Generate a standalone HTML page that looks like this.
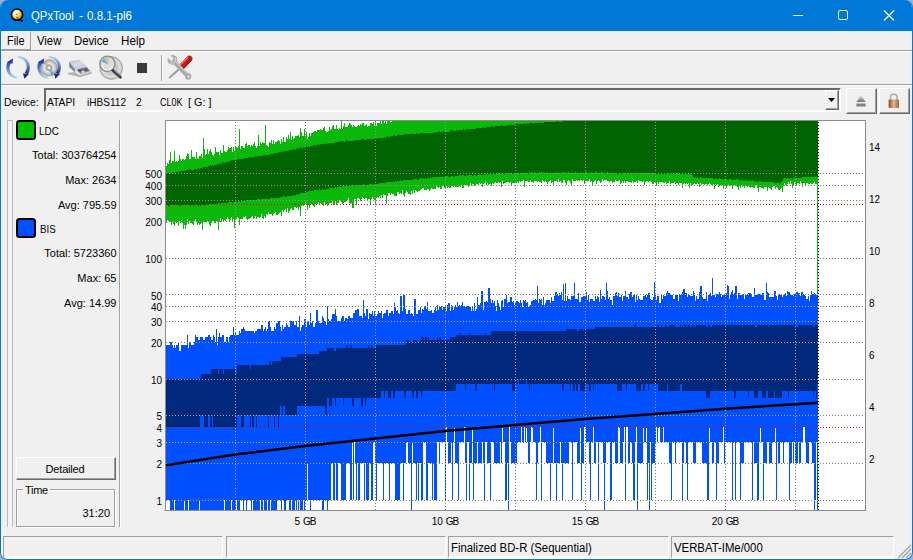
<!DOCTYPE html>
<html><head><meta charset="utf-8"><title>QPxTool</title>
<style>
*{box-sizing:border-box;margin:0;padding:0}
html,body{width:913px;height:560px;overflow:hidden;background:#9cb0c8}
body{font-family:"Liberation Sans",sans-serif;font-size:11px;color:#000;position:relative}
#win{position:absolute;left:0;top:0;width:913px;height:560px;background:#f0f0f0;border:1px solid #0078d7;border-top:none;border-radius:8px;overflow:hidden}
.abs{position:absolute}
#title{position:absolute;left:-1px;top:0;width:913px;height:31px;background:#0078d7;color:#fff;font-size:12px}
#title .t{position:absolute;top:9px;line-height:15px;white-space:nowrap;transform-origin:0 50%}
#menu{position:absolute;left:0;top:31px;width:911px;height:20px;font-size:12px}
#menu span{position:absolute;top:3px;line-height:14px;transform-origin:0 50%}
.hl{border-top:1px solid #a0a0a0;border-bottom:1px solid #fff;height:2px;position:absolute;left:0;width:911px}
.sunk{border:1px solid;border-color:#a0a0a0 #fff #fff #a0a0a0}
.rais{border:1px solid;border-color:#fff #696969 #696969 #fff;box-shadow:inset -1px -1px 0 #a0a0a0}
.yl{font-size:10px;position:absolute;left:118px;width:71px;text-align:right;height:14px;line-height:14px;transform:translateX(-28px)}
.yr{font-size:10px;position:absolute;left:868px;height:14px;line-height:14px}
.xl{font-size:10px;position:absolute;top:514px;width:60px;text-align:center;height:14px;line-height:14px}.xl span{letter-spacing:-1px}
.st{position:absolute;top:536px;height:23px;border:1px solid;border-bottom:3px solid;border-color:#a0a0a0 #fff #fff #a0a0a0;font-size:12px;line-height:23px;padding-left:2px;white-space:nowrap}.st span{display:inline-block;transform-origin:0 50%;transform:scaleX(.946)}
.dv{top:5px;line-height:14px;white-space:pre;transform-origin:0 50%}.pv{position:absolute;right:795.5px;height:14px;line-height:14px;white-space:nowrap}
</style></head><body>
<div id="win">
 <div id="title">
  <svg class="abs" style="left:8px;top:6px" width="18" height="18" viewBox="0 0 18 18">
   <defs><radialGradient id="ti" cx="0.32" cy="0.3" r="0.8"><stop offset="0" stop-color="#fff"/><stop offset="0.35" stop-color="#fde8b0"/><stop offset="0.7" stop-color="#f8b818"/><stop offset="1" stop-color="#f09800"/></radialGradient></defs>
   <path d="M11.4 13.6 L14.8 15.6" stroke="#0a0a0a" stroke-width="1.7"/>
   <circle cx="9" cy="8.6" r="5.6" fill="url(#ti)" stroke="#050505" stroke-width="1.7"/>
   <circle cx="8.8" cy="8.2" r="0.8" fill="#4a86c8"/>
   <path d="M8.6 11.2 L10.6 12.2" stroke="#222" stroke-width="1"/>
  </svg>
  <div class="t tw" style="left:31.2px;transform:scaleX(.945)">QPxTool</div><div class="t tw" style="left:78.6px;transform:scaleX(1.1)">-</div><div class="t tw" style="left:86.6px;transform:scaleX(.964)">0.8.1-pl6</div>
  <svg class="abs" style="left:780px;top:0" width="133" height="31" viewBox="0 0 133 31">
   <path d="M13 15.5H23" stroke="#fff" stroke-width="1"/>
   <rect x="58.5" y="10.5" width="9" height="9" rx="1.3" fill="none" stroke="#fff" stroke-width="1"/>
   <path d="M104 10.5L114 20.5M114 10.5L104 20.5" stroke="#fff" stroke-width="1.1"/>
  </svg>
 </div>
 <div id="menu">
  <div class="abs" style="left:0;top:0;width:30px;height:19px;border:1px solid;border-color:#fff #a0a0a0 #a0a0a0 #fff"></div>
  <span style="left:6.2px;transform:scaleX(.907)">File</span><span style="left:36.2px;transform:scaleX(.942)">View</span><span style="left:73.3px;transform:scaleX(.943)">Device</span><span style="left:120.4px;transform:scaleX(.972)">Help</span>
 </div>
 <div class="hl" style="top:50px"></div>
 <!-- toolbar -->
 <svg class="abs" style="left:-1px;top:52px" width="200" height="32" viewBox="0 0 200 32">
  <defs>
   <linearGradient id="ar1" x1="0" y1="1" x2="0" y2="0"><stop offset="0" stop-color="#b8dcf8"/><stop offset="1" stop-color="#1c3c9c"/></linearGradient>
   <linearGradient id="ar2" x1="0" y1="0" x2="0" y2="1"><stop offset="0" stop-color="#b8dcf8"/><stop offset="1" stop-color="#1a2a8c"/></linearGradient>
   <linearGradient id="dtop" x1="0" y1="0" x2="1" y2="1"><stop offset="0" stop-color="#b0b8c8"/><stop offset=".5" stop-color="#d8dee8"/><stop offset="1" stop-color="#a8b0c0"/></linearGradient><radialGradient id="cd2" cx="0.5" cy="0.5" r="0.5"><stop offset="0" stop-color="#f4f4f4"/><stop offset="0.5" stop-color="#c4c4c4"/><stop offset="0.8" stop-color="#e2e2e2"/><stop offset="1" stop-color="#a4a4a4"/></radialGradient><radialGradient id="cd" cx="0.5" cy="0.5" r="0.5"><stop offset="0" stop-color="#f8f8f8"/><stop offset="0.3" stop-color="#9c9c9c"/><stop offset="0.5" stop-color="#e8e8e8"/><stop offset="0.8" stop-color="#c4c4c4"/><stop offset="1" stop-color="#a4a4a4"/></radialGradient>
  </defs>
  <!-- icon1 refresh -->
  <g id="arrows">
   <path d="M16.8 26.8L15.2 26.6L13.6 26.1L12.1 25.3L10.7 24.4L9.5 23.3L8.4 22.0L7.5 20.5L6.9 19.0L6.5 17.3L6.3 15.6L6.4 13.9L6.7 12.3L7.2 10.7L8.0 9.1L11.1 11.1L10.5 12.1L10.0 13.2L9.7 14.4L9.5 15.6L9.6 16.8L9.8 18.0L10.1 19.2L10.7 20.4L11.4 21.4L12.3 22.4L13.3 23.2L14.5 23.9L15.7 24.4L17.0 24.7Z" fill="url(#ar1)"/>
   <path d="M7.6 9.9L13.1 6.3L12.5 11.8Z" fill="#1c3ca0"/>
   <path d="M17.6 3.8L19.5 3.9L21.3 4.2L23.1 4.9L24.7 5.8L26.2 7.0L27.5 8.4L28.5 10.0L29.3 11.8L29.7 13.7L29.9 15.6L29.7 17.5L29.3 19.4L28.5 21.2L27.5 22.8L24.5 20.5L25.4 19.4L26.0 18.2L26.4 16.9L26.7 15.5L26.7 14.1L26.4 12.7L26.0 11.3L25.3 10.0L24.4 8.9L23.3 7.9L22.1 7.0L20.7 6.4L19.2 6.0L17.7 5.8Z" fill="url(#ar2)"/>
   <path d="M23 21.5L29 22.1L24.4 26.7Z" fill="#1a2a8c"/>
  </g>
  <!-- icon2 disc + arrows -->
  <circle cx="49" cy="15.8" r="8.2" fill="url(#cd)" stroke="#909090" stroke-width="0.6"/>
  <path d="M49 15.8 L42.6 10.6 L44.2 8.8Z" fill="#78cc78" opacity=".85"/><path d="M49 15.8 L44.2 8.8 L46.6 7.9Z" fill="#e8a870" opacity=".85"/>
  <path d="M49 15.8 L55.4 21 L53.8 22.8Z" fill="#78cc78" opacity=".85"/><path d="M49 15.8 L53.8 22.8 L51.4 23.7Z" fill="#6888e0" opacity=".85"/>
  <circle cx="49" cy="15.8" r="2.6" fill="#b8b8b8" stroke="#9a9a9a" stroke-width=".5"/><circle cx="49" cy="15.8" r="1.2" fill="#f4f4f4"/>
  <use href="#arrows" x="31" y="0"/>
  <!-- icon3 drive -->
  <path d="M67.8 20.8 L75 20.2 L80.2 23.4 L91.6 20.2 L92 21.6 L80.4 25.2 L68 22.2Z" fill="#a4a4a4" opacity=".85"/>
  <path d="M68.9 9.7 L79.1 7.6 L86.4 13.9 L75.2 17Z" fill="url(#dtop)"/>
  <path d="M68.9 9.7 L75.2 17 L75.2 20.4 L69.3 15.3Z" fill="#8088a0"/>
  <path d="M75.2 17 L86.4 13.9 L91.7 19.4 L80.1 23Z" fill="#d4d6dc"/>
  <path d="M76.6 17.6 L86.2 15 L90 19 L80.4 21.8Z" fill="#787e90"/>
  <ellipse cx="80.2" cy="18.6" rx="2" ry="1.5" fill="#565c70"/><ellipse cx="86.2" cy="17.6" rx="2" ry="1.6" fill="#5a6074"/>
  <ellipse cx="83" cy="20" rx="1.9" ry="1.2" fill="#ecc4b0"/>
  <path d="M80.1 23 L91.7 19.4 L91.7 20.6 L80.1 24.2Z" fill="#b8bac0"/>
  <!-- icon4 magnifier disc -->
  <circle cx="111.2" cy="16" r="11.4" fill="url(#cd2)" stroke="#a0a0a0" stroke-width="0.7"/>
  <path d="M111.6 16 L119.4 26.4 L116.2 27.6Z" fill="#e8c898" opacity=".8"/><path d="M111.6 16 L121.6 22.4 L119.4 26.4Z" fill="#98a8e8" opacity=".6"/>
  <circle cx="111.6" cy="16" r="2.6" fill="#e8e8e8" stroke="#b0b0b0" stroke-width=".5"/>
  <circle cx="107.4" cy="11.8" r="7.6" fill="#e4e4e4" fill-opacity=".7" stroke="#8a8a8a" stroke-width="1.3"/>
  <path d="M108.4 12.4 L101.6 9.6 L103.6 6.4Z" fill="#6c8ce4" opacity=".85"/><path d="M108.4 12.4 L103.6 6.4 L106.4 5Z" fill="#86d486" opacity=".85"/><path d="M108.4 12.4 L106.4 5 L109.6 4.8Z" fill="#f0b49c" opacity=".8"/>
  <path d="M101.4 13.6 A6.4 6.4 0 0 0 112.6 15.6" stroke="#fff" stroke-width="1" fill="none" opacity=".8"/>
  <path d="M112.8 18.4 L120.4 25.2" stroke="#404040" stroke-width="2.8" stroke-linecap="round"/>
  <path d="M114.8 19 L119.4 23" stroke="#6890e0" stroke-width="1" stroke-linecap="round"/>
  <!-- stop -->
  <rect x="137" y="11" width="10" height="10" fill="#3a3a3a"/>
  <!-- sep -->
  <rect x="161" y="3" width="1" height="26" fill="#a0a0a0"/><rect x="162" y="3" width="1" height="26" fill="#fff"/>
  <!-- tools -->
  <path d="M180 16.2 L170 25.2" stroke="#9c9c9c" stroke-width="2" stroke-linecap="butt"/>
  <path d="M171.2 23 L168.4 25.6 L169.6 26.8 L172.4 24.2Z" fill="#a8a8a8"/>
  <path d="M189.4 6.6 L181 15.2" stroke="#c81818" stroke-width="6" stroke-linecap="round"/>
  <path d="M187.6 5.4 L179.4 13.8" stroke="#f47878" stroke-width="1.4" stroke-linecap="round"/>
  <path d="M191 8.4 L182.8 16.8" stroke="#8c0c0c" stroke-width="1.2" stroke-linecap="round"/>
  <path d="M174.6 10.2 L187.6 23.8" stroke="#a8a8a8" stroke-width="4.4" stroke-linecap="butt"/>
  <path d="M175.4 9.4 L188.2 22.8" stroke="#e0e0e0" stroke-width="1" stroke-linecap="butt"/>
  <circle cx="172.4" cy="7.8" r="4.9" fill="#acacac"/>
  <path d="M172.6 8 L167.4 2.8" stroke="#f0f0f0" stroke-width="3.4"/>
  <path d="M170.2 10.6 A3.6 3.6 0 0 0 175.2 5.6" stroke="#dcdcdc" stroke-width="1" fill="none"/>
  <circle cx="188.2" cy="24.4" r="3.1" fill="#a8a8a8"/><circle cx="188.4" cy="24.6" r="1.1" fill="#f0f0f0"/>
 </svg>
 <div class="hl" style="top:84px"></div>
 <!-- device row -->
 <div class="abs" style="left:2.9px;top:95px;line-height:14px;transform-origin:0 50%;transform:scaleX(.943)">Device:</div>
 <div class="abs" style="left:43px;top:88px;width:797px;height:24px;border:2px solid;border-color:#696969 #fff #fff #696969;box-shadow:inset 0 0 0 0 #000;background:#f0f0f0">
   <div class="abs dv" style="left:0.9px;transform:scaleX(.935)">ATAPI</div><div class="abs dv" style="left:41.3px;transform:scaleX(.918)">iHBS112</div><div class="abs dv" style="left:90.1px;transform:scaleX(.92)">2</div><div class="abs dv" style="left:113.9px;transform:scaleX(.818)">CL0K</div><div class="abs dv" style="left:141.5px;transform:scaleX(.985)">[ G: ]</div>
   <div class="abs rais" style="right:0;top:0;width:14px;height:20px;background:#f0f0f0"><svg class="abs" style="left:2px;top:7px" width="8" height="5"><path d="M0 0H7L3.5 4Z" fill="#000"/></svg></div>
 </div>
 <div class="abs rais" style="left:845px;top:88px;width:31px;height:26px">
   <svg class="abs" style="left:9px;top:6px" width="10" height="13" viewBox="0 0 12 13" preserveAspectRatio="none"><defs><linearGradient id="ej" x1="0" y1="0" x2="0" y2="1"><stop offset="0" stop-color="#e8e8e8"/><stop offset="1" stop-color="#707070"/></linearGradient></defs><path d="M6 0L11.5 7H.5Z" fill="url(#ej)"/><rect x=".5" y="8.5" width="11" height="3" fill="#808080"/></svg>
 </div>
 <div class="abs rais" style="left:878px;top:88px;width:31px;height:26px">
   <svg class="abs" style="left:8px;top:4px" width="13" height="17" viewBox="0 0 13 17"><defs><linearGradient id="lk" x1="0" y1="0" x2="1" y2="0"><stop offset="0" stop-color="#8a4a28"/><stop offset=".5" stop-color="#e4b888"/><stop offset="1" stop-color="#a06038"/></linearGradient></defs><path d="M2.55 7.5V4.3A3.25 3.25 0 0 1 9.05 4.3V7.5" fill="none" stroke="#b4b4b4" stroke-width="1.7"/><rect x="0.6" y="6.4" width="10.4" height="8.7" rx="1" fill="url(#lk)"/></svg>
 </div>
 <!-- left panel -->
 <div class="abs" style="left:6px;top:120px;width:6px;height:407px;border:1px solid #bcbcbc;border-bottom:none;background:#f4f4f4"></div>
 <div class="abs" style="left:118px;top:120px;width:2px;height:407px;border-left:1px solid #a0a0a0;border-right:1px solid #fff"></div>
 <div class="abs" style="left:15px;top:120px;width:20px;height:20px;border:2px solid #000;border-radius:3.5px;background:#00be00"></div>
 <div class="abs" style="left:38.3px;top:124px;line-height:14px;transform-origin:0 50%;transform:scaleX(.9)">LDC</div>
 <div class="pv" style="top:148px">Total: 303764254</div>
 <div class="pv" style="top:173px">Max: 2634</div>
 <div class="pv" style="top:198px">Avg: 795.59</div>
 <div class="abs" style="left:15px;top:218px;width:20px;height:20px;border:2px solid #000;border-radius:3.5px;background:#0050ff"></div>
 <div class="abs" style="left:38.5px;top:222px;line-height:14px;transform-origin:0 50%;transform:scaleX(.886)">BIS</div>
 <div class="pv" style="top:246px">Total: 5723360</div>
 <div class="pv" style="top:271px">Max: 65</div>
 <div class="pv" style="top:296px">Avg: 14.99</div>
 <div class="abs rais" style="left:15px;top:457px;width:100px;height:23px;text-align:center;line-height:23px;letter-spacing:-.2px;text-indent:-2px">Detailed</div>
 <div class="abs" style="left:15px;top:489px;width:99px;height:38px;border:1px solid #a0a0a0;box-shadow:inset 1px 1px 0 #fff, 1px 1px 0 #fff"></div>
 <div class="abs" style="left:22px;top:483px;background:#f0f0f0;padding:0 2px;line-height:14px;letter-spacing:-.3px">Time</div>
 <div class="abs" style="left:60px;width:49px;text-align:right;top:506px;line-height:14px">31:20</div>
 <!-- chart -->
 <div class="abs" style="left:164px;top:120px;width:701px;height:391px;border:1px solid #8c8c8c;background:#fff"></div>
 <svg class="abs" style="left:-1px;top:0" width="913" height="560" viewBox="0 0 913 560" shape-rendering="crispEdges">
<path id="lb" fill="#0050ff" d="M166 500V345H170V342H172V345H173V348H174V345H175V348H176V345H178V342H179V351H181V345H187V335H188V348H189V342H191V345H194V342H195V335H196V337H198V340H200V337H203V340H205V337H208V335H210V337H211V340H213V335H214V337H215V342H216V329H217V345H218V337H219V333H220V337H222V335H224V342H226V337H228V342H229V337H230V335H233V327H234V335H235V333H236V335H239V331H240V333H241V329H243V327H244V329H245V331H254V333H255V331H257V329H261V325H263V331H264V329H265V327H266V331H267V329H268V321H270V327H271V331H274V327H275V329H276V323H278V321H280V327H281V331H282V325H283V329H284V327H286V323H287V325H288V327H290V321H294V325H296V321H297V327H299V316H300V331H301V327H302V325H304V319H306V327H307V321H309V325H310V313H311V323H312V321H313V327H315V323H316V310H318V321H319V323H322V316H323V318H324V321H326V325H327V306H328V319H329V321H331V319H332V314H335V309H336V316H337V321H341V318H342V316H344V321H345V318H347V319H348V316H350V318H353V313H355V310H357V309H359V316H362V318H363V300H364V313H365V316H366V309H368V319H369V313H370V314H372V311H373V316H374V311H375V316H377V314H378V311H379V313H381V311H382V318H383V314H384V313H386V310H388V316H389V313H391V311H393V314H394V303H395V307H396V311H397V310H398V313H399V314H400V296H402V311H403V295H405V309H406V314H408V310H410V314H411V313H412V314H413V316H414V299H416V314H418V310H420V307H421V313H422V309H423V310H424V306H426V309H427V302H428V311H431V310H432V313H434V310H435V307H436V311H437V305H438V310H439V307H441V306H442V310H443V307H446V311H447V305H448V303H450V311H451V305H452V306H453V310H454V306H455V305H456V307H457V302H458V306H459V305H460V307H461V305H462V302H463V307H464V306H465V307H467V306H470V307H471V311H472V307H473V311H474V303H475V311H476V309H477V297H478V305H480V303H481V291H483V310H484V302H486V301H487V302H488V288H490V299H491V303H492V300H493V303H494V301H495V306H496V311H497V300H498V303H499V306H500V310H501V301H502V300H503V307H504V299H506V295H507V303H508V302H510V297H512V302H513V301H514V305H515V302H516V301H518V302H519V303H520V300H521V303H522V307H523V300H524V301H525V300H526V303H527V302H528V307H530V305H531V301H533V300H535V299H536V300H537V286H538V303H539V299H540V300H541V299H542V305H543V297H544V305H545V303H546V300H550V303H551V297H552V301H554V296H555V292H557V294H558V296H559V293H560V295H561V292H562V300H563V284H564V301H565V283H566V301H567V296H568V299H570V300H571V296H574V283H575V299H578V293H579V302H581V297H583V296H585V297H586V292H587V300H588V295H589V302H590V299H593V301H595V296H596V299H597V296H598V297H599V302H600V290H601V299H602V296H604V297H605V300H606V283H607V291H608V299H609V297H610V300H612V305H613V296H615V293H616V292H617V296H618V293H619V297H621V295H622V301H623V296H625V291H626V297H628V299H629V294H630V292H632V297H633V295H635V302H636V295H637V300H638V296H639V299H640V300H643V296H645V295H646V297H647V295H648V293H650V299H651V300H653V297H654V282H655V293H656V300H657V296H659V303H661V295H662V299H663V295H664V296H666V293H667V291H668V293H670V295H673V299H675V295H676V294H677V295H678V301H679V295H681V294H682V292H683V289H685V293H687V297H688V295H690V296H693V291H694V293H695V301H696V296H697V299H699V292H700V286H702V297H703V299H706V292H707V301H708V295H710V293H711V296H712V278H713V295H715V297H716V294H719V292H720V294H721V297H722V295H726V293H727V285H728V286H729V299H730V294H731V292H732V290H733V294H734V293H735V286H737V299H738V293H740V295H742V294H744V299H745V295H747V294H748V293H751V295H752V297H754V288H755V295H758V294H760V295H762V293H764V300H766V283H767V292H768V293H769V297H774V291H776V296H777V300H778V294H780V295H782V297H783V295H785V293H786V296H787V291H788V292H790V295H793V296H794V294H796V292H798V293H800V296H801V292H803V294H804V295H805V296H806V299H808V296H809V301H810V295H811V291H812V294H814V293H815V294H816V295H817V292H818V510V510H817V442H816V500H815V510H814V463H812V442H809V463H806V442H805V427H803V442H801V463H799V442H798V463H795V442H794V463H793V442H792V463H790V500H789V442H784V463H783V442H780V463H778V442H777V500H776V427H775V442H772V463H769V442H767V463H764V500H763V442H761V427H760V442H759V500H757V463H754V442H753V500H752V442H744V463H741V500H740V442H736V500H735V442H733V500H732V442H725V463H724V427H723V442H719V463H717V500H716V442H714V463H712V442H710V427H709V500H707V463H702V442H696V463H693V442H688V500H687V463H686V442H684V463H683V500H682V442H676V463H675V442H672V500H671V463H669V442H664V427H663V442H660V427H658V442H657V427H656V442H655V463H652V500H651V442H650V510H649V463H648V500H647V427H646V442H644V427H643V463H638V510H637V427H636V442H635V500H633V463H632V442H630V463H628V427H626V500H625V427H624V442H623V463H620V427H618V463H615V442H612V500H610V442H606V463H605V510H604V463H603V442H599V500H598V442H596V463H594V427H593V442H591V500H590V463H589V442H586V427H584V463H582V500H581V427H580V463H577V442H573V500H572V442H569V463H563V500H562V463H561V442H560V463H557V500H556V463H554V427H553V463H551V500H550V463H546V442H542V500H541V427H540V442H538V463H537V500H536V442H533V427H531V442H530V463H528V442H527V427H526V442H525V427H524V442H522V427H521V442H517V463H511V442H510V427H509V510H508V463H507V500H505V442H503V427H502V463H501V442H500V463H494V442H491V500H490V463H487V442H485V500H484V463H483V442H482V463H478V442H477V463H474V500H473V427H472V463H470V500H469V442H467V500H466V463H465V427H464V442H459V500H458V463H455V427H454V442H453V500H452V442H451V463H448V442H447V427H446V500H445V442H440V463H439V442H437V500H434V463H433V500H432V463H428V500H426V442H423V500H421V463H419V500H418V463H417V500H416V463H413V442H412V510H411V463H408V442H406V463H404V500H403V463H400V500H395V463H390V500H389V463H384V500H383V463H377V500H376V463H375V442H373V500H371V463H369V500H366V463H365V500H364V463H360V500H358V463H357V500H356V463H355V442H354V500H353V442H352V500H350V463H346V500H341V463H338V500H336V463H335V500H333V463H331V500H328V510H327V500H324V510H322V500H311V510H310V500H308V463H307V500H305V510H304V500H303V510H300V500H299V510H298V500H297V510H296V500H295V510H292V500H291V510H289V500H286V510H284V500H282V510H281V500H277V510H271V500H270V510H268V500H267V510H264V500H263V510H261V500H260V510H253V500H252V510H251V500H247V510H246V500H244V510H243V500H240V510H237V500H236V510H232V500H231V510H225V500H224V510H200V500H199V510H189V500H188V510H185V500H184V510H175V500H174V510H170V500H166Z"/>
<path fill="#00287d" d="M166 427V379H201V374H211V369H218V374H219V369H223V374H224V369H235V374H237V365H250V369H251V365H269V361H271V365H272V361H281V357H297V354H319V351H327V348H334V351H336V348H346V345H348V348H350V345H352V348H368V345H369V348H371V345H372V348H376V345H406V340H409V342H413V340H417V342H420V340H421V337H424V340H425V337H427V340H428V337H429V340H433V337H434V340H437V337H438V340H439V337H441V340H450V337H456V335H460V333H461V335H469V333H470V335H485V333H486V335H491V331H566V329H577V331H579V329H583V331H584V329H595V327H634V325H636V327H657V325H659V327H661V325H662V327H665V325H667V327H669V325H675V327H680V325H681V327H682V325H683V327H684V325H687V327H688V325H690V327H692V325H693V327H694V325H695V327H696V325H706V327H708V325H710V327H712V325H742V327H743V325H755V327H757V325H768V327H769V325H796V327H798V325H813V327H815V325H818V384V384H817V398H816V391H814V398H813V391H789V398H788V391H782V398H775V391H774V398H768V391H766V398H762V391H758V398H754V391H749V398H748V391H736V398H734V391H710V398H706V391H682V384H680V391H668V384H667V391H658V384H649V391H648V384H645V391H643V384H641V391H636V384H627V391H626V384H622V391H617V384H594V391H593V384H591V391H589V384H585V391H580V384H578V391H576V384H575V391H573V384H571V391H570V384H564V391H562V384H530V391H529V384H527V379H526V384H519V379H518V384H515V391H512V384H495V391H494V384H477V391H475V384H466V391H465V384H456V391H422V398H421V391H418V398H416V391H414V398H412V391H406V398H404V391H395V398H393V391H391V398H388V391H385V398H384V391H381V398H366V406H365V398H363V406H361V398H354V406H352V398H344V406H343V398H336V406H335V398H332V406H329V398H327V415H325V406H297V415H285V406H283V415H282V406H280V415H279V427H278V415H275V427H274V415H269V427H268V415H257V427H256V415H254V427H252V415H251V427H250V415H244V427H241V415H237V427H213V415H212V427H210V415H208V427H204V415H200V427H166Z"/>
<path id="lgp" fill="#0ab80a" d="M166 223V166H167V163H168V164H169V160H170V152H171V163H172V161H174V151H175V162H176V161H177V162H178V161H179V155H180V159H181V161H182V159H184V160H185V159H186V156H187V153H188V154H189V159H191V150H192V157H195V159H196V152H197V158H198V159H199V156H201V154H202V158H203V138H204V149H205V155H206V154H207V149H208V154H209V151H210V149H211V152H212V155H213V156H214V154H215V147H216V152H219V155H220V150H221V153H223V145H224V151H225V152H227V150H228V147H229V148H231V147H232V152H233V147H234V151H235V147H237V148H238V146H239V129H240V149H241V146H243V148H245V144H246V143H247V146H248V145H250V147H251V145H252V146H253V144H254V142H255V146H256V148H257V146H258V135H259V146H260V142H261V144H262V142H263V143H265V125H266V145H267V146H268V147H269V142H270V143H271V140H272V144H273V140H274V144H275V142H277V141H278V140H279V141H280V144H281V139H282V142H283V137H284V142H286V137H287V139H288V135H289V139H290V132H291V140H292V136H293V139H294V138H295V136H298V135H299V137H300V128H301V132H302V136H304V129H305V136H306V132H307V139H308V137H309V133H310V136H311V133H313V132H314V131H316V132H317V130H320V129H321V130H323V128H324V127H325V131H326V132H328V131H329V127H330V130H331V129H332V126H333V125H334V129H336V125H337V129H338V130H339V128H340V129H341V121H342V129H343V126H344V123H345V127H348V125H349V123H350V124H351V125H352V127H353V125H354V126H355V127H357V126H358V125H359V126H360V124H361V125H362V123H364V126H365V125H366V124H367V127H368V126H370V123H372V124H373V122H374V126H375V121H376V126H377V123H380V121H381V124H382V121H384V123H385V121H386V124H387V121H390V122H392V121H818V183V183H817V184H815V182H814V183H813V184H811V183H810V184H808V183H806V185H805V183H803V187H802V183H801V181H800V184H799V183H797V186H796V184H795V182H794V186H793V188H792V184H791V181H790V184H789V182H788V184H787V186H786V185H785V183H784V186H783V192H782V188H781V189H780V190H778V188H777V187H776V189H775V186H773V187H772V190H771V189H770V188H769V187H768V191H767V187H764V189H763V188H761V187H759V192H758V188H757V185H756V186H755V188H753V187H751V188H750V187H749V186H748V187H747V186H745V188H744V186H743V187H742V185H741V188H740V185H739V190H738V187H737V186H735V185H734V186H733V189H732V185H730V186H729V185H727V188H726V186H724V189H723V185H722V186H721V185H720V186H719V187H718V184H717V185H716V184H715V189H714V184H713V185H711V184H710V183H709V184H708V185H707V184H705V185H704V184H702V185H701V183H700V187H699V184H698V183H697V184H695V183H694V184H693V185H691V183H690V188H689V183H688V184H687V183H686V184H685V183H684V184H683V188H682V183H679V185H678V183H676V184H675V182H674V183H671V184H670V181H669V183H667V184H666V182H665V183H663V182H659V184H658V182H657V186H656V182H654V184H652V182H651V181H649V182H648V181H646V182H645V185H644V181H643V182H642V181H639V180H638V183H637V181H636V182H634V183H633V181H632V183H631V182H628V181H626V183H625V181H624V183H623V181H622V183H621V184H620V180H619V181H616V180H615V182H613V183H612V181H610V182H609V181H607V180H604V181H603V179H602V182H601V183H600V181H599V180H598V181H597V184H596V180H595V181H594V182H593V186H592V181H591V182H590V179H589V181H585V184H584V180H583V181H582V180H580V181H579V180H578V181H577V180H576V181H573V179H572V185H571V183H570V181H569V180H568V181H567V185H566V183H565V180H563V183H561V181H560V182H559V179H558V182H557V181H554V185H553V182H552V183H551V180H550V181H549V182H548V184H547V182H546V181H545V182H544V181H543V180H542V183H541V182H539V181H538V182H537V181H534V183H533V182H531V180H530V182H528V181H525V187H524V180H523V181H521V182H520V181H519V183H518V182H517V183H512V185H511V182H510V183H509V182H506V183H504V184H503V181H502V187H501V182H500V183H499V182H498V183H496V182H495V183H494V184H493V183H492V186H491V184H489V185H488V183H487V185H486V182H485V183H484V184H483V187H482V183H481V184H480V183H479V186H478V184H476V185H475V186H474V184H472V186H471V183H470V185H469V187H468V185H467V186H466V185H464V188H462V185H461V187H460V186H459V187H455V185H454V187H453V186H452V185H451V188H449V187H448V188H447V186H446V188H444V186H442V189H440V187H439V188H438V187H437V186H436V189H432V188H431V190H430V191H429V189H427V190H424V188H422V189H421V190H420V191H418V192H417V191H416V190H415V193H414V190H413V194H412V191H411V195H410V194H408V192H407V191H406V193H405V197H404V195H403V190H402V194H401V193H400V194H399V192H397V196H394V194H392V193H391V195H390V193H388V196H387V204H386V195H384V194H383V198H382V195H381V198H380V196H379V198H378V197H377V198H376V205H375V200H374V199H373V197H372V199H371V205H370V199H368V200H367V198H365V199H364V198H363V197H362V199H361V201H360V199H359V198H357V205H356V199H354V208H352V203H351V204H350V203H349V198H348V200H346V202H344V203H343V204H342V202H341V201H340V200H339V203H337V205H336V201H335V204H334V205H333V201H332V203H329V205H328V206H327V204H325V202H324V206H323V204H321V203H320V204H319V202H318V204H317V205H316V204H315V207H314V206H313V205H312V204H311V205H310V208H309V205H308V210H307V205H306V202H305V205H304V206H303V205H302V206H301V216H300V207H299V210H298V207H297V208H296V207H294V210H292V208H291V209H290V211H289V213H288V208H287V212H286V209H285V210H284V212H283V210H282V216H281V212H280V213H279V214H278V215H276V212H275V213H274V214H273V216H272V214H269V212H268V215H267V214H266V218H265V216H264V219H263V218H262V214H261V217H260V218H259V217H257V219H256V216H255V218H254V219H253V216H252V217H251V218H250V219H248V220H247V219H246V216H245V217H243V219H240V225H239V218H238V217H237V219H236V220H235V228H234V219H233V221H232V217H231V220H230V221H229V219H228V217H227V219H226V221H225V220H224V222H223V219H222V222H221V218H220V222H219V230H218V221H216V223H214V221H212V223H211V226H210V225H209V222H208V221H207V222H206V221H205V222H203V230H202V223H201V224H200V225H199V223H198V225H197V221H196V219H195V221H194V225H193V224H192V223H190V221H189V224H188V219H187V225H186V229H185V225H184V229H183V223H182V220H181V223H180V221H179V226H178V222H177V223H176V222H175V226H174V224H173V222H172V225H171V222H169V221H168V220H167V223H166Z"/>
<path fill="#006400" d="M166 205V174H167V173H172V172H174V173H175V172H179V171H186V170H189V169H191V170H194V169H198V168H199V169H200V168H203V167H208V166H210V165H211V166H212V165H213V166H214V165H217V164H220V163H221V164H222V162H223V163H225V162H229V161H231V160H237V159H244V158H248V157H249V158H250V157H252V158H253V157H255V156H256V157H257V156H263V155H265V156H266V155H270V154H274V153H278V152H282V151H283V152H284V151H289V150H293V149H295V150H296V149H297V148H298V149H299V148H300V147H301V148H303V147H304V148H305V147H306V146H307V147H308V146H309V147H310V146H313V145H315V146H316V145H318V144H319V145H320V144H321V145H322V144H326V143H327V144H328V143H335V142H339V141H340V142H341V141H344V142H345V141H346V140H347V141H354V140H361V139H364V140H366V139H375V138H376V139H377V138H384V137H385V138H386V137H387V136H388V137H390V136H394V135H395V136H397V135H404V134H407V135H408V134H412V133H413V134H416V133H417V134H420V133H422V134H423V133H434V132H435V133H436V132H439V131H440V132H443V131H444V132H450V130H453V131H456V130H457V131H458V130H463V129H464V130H466V129H469V130H470V129H476V128H483V127H484V128H486V127H491V126H493V127H495V126H501V125H503V126H506V125H510V124H511V125H515V124H524V123H525V124H527V123H528V124H529V123H533V124H534V123H540V122H541V123H544V122H556V121H557V122H558V121H559V122H562V121H818V177V177H802V178H795V177H794V178H793V179H792V178H790V179H789V178H787V179H786V178H784V179H783V181H782V182H781V183H778V182H777V183H774V182H761V181H759V182H757V181H756V182H755V181H753V180H752V181H750V180H749V181H747V180H745V181H743V180H741V181H740V180H738V179H736V180H731V179H729V180H727V179H726V180H725V179H720V178H719V179H717V178H716V179H713V178H701V177H700V178H696V177H695V178H694V177H693V175H691V174H678V173H677V174H672V173H671V174H669V173H668V174H655V173H641V174H640V173H630V174H629V173H627V174H625V173H622V174H621V173H619V174H616V173H608V172H607V173H603V172H601V173H597V172H595V173H592V172H591V173H587V172H585V173H582V172H581V173H576V172H575V173H569V172H567V173H565V172H563V173H562V172H561V173H558V172H557V173H556V172H555V173H547V172H546V173H544V172H543V173H542V172H541V173H540V172H539V173H535V172H534V173H532V172H531V173H530V172H529V174H528V173H514V174H512V173H505V174H499V173H498V174H488V175H487V174H485V175H480V174H479V175H477V176H476V175H473V176H472V175H468V176H467V175H466V176H464V175H462V176H461V175H459V176H454V177H453V176H451V177H448V176H445V177H434V178H433V177H432V178H431V177H430V179H429V178H427V179H426V178H425V179H424V178H423V179H422V178H420V179H419V180H417V179H413V180H403V181H401V180H400V181H397V182H396V181H395V182H394V181H393V182H386V183H379V184H374V185H373V184H369V185H364V184H363V185H355V186H354V185H353V186H352V185H351V186H342V187H337V188H336V187H335V188H329V189H326V190H325V189H324V190H323V189H322V190H320V189H319V191H318V190H314V191H308V192H306V193H300V194H298V195H297V194H296V195H295V196H294V195H292V196H287V197H285V196H283V197H280V198H274V199H273V198H270V199H266V198H265V199H261V200H260V199H257V200H251V201H250V200H248V201H247V200H246V201H241V202H240V201H238V202H236V201H235V202H233V203H232V202H228V203H221V204H220V203H218V204H209V205H207V204H206V205H205V206H204V205H201V206H200V205H199V206H198V205H194V206H193V205H191V206H190V205H182V206H181V205H180V206H179V205H170V206H168V205H166Z"/>
<rect x="817" y="183" width="1" height="109" fill="#00c000"/>
<path id="grid" d="M166 173.5H864M166 185.5H864M166 200.5H864M166 221.5H864M166 258.5H864M166 294.5H864M166 306.5H864M166 321.5H864M166 342.5H864M166 379.5H864M166 415.5H864M166 442.5H864M166 463.5H864M166 500.5H864M235.5 122V510M305.5 122V510M375.5 122V510M445.5 122V510M515.5 122V510M585.5 122V510M655.5 122V510M725.5 122V510M795.5 122V510M865.5 122V510" stroke="#808080" stroke-width="1" stroke-dasharray="1 2" fill="none"/>
<clipPath id="cb"><use href="#lb"/></clipPath><clipPath id="cg"><use href="#lgp"/></clipPath>
<path d="M166 173.5H864M166 185.5H864M166 200.5H864M166 221.5H864M166 258.5H864M166 294.5H864M166 306.5H864M166 321.5H864M166 342.5H864M166 379.5H864M166 415.5H864M166 442.5H864M166 463.5H864M166 500.5H864M235.5 122V510M305.5 122V510M375.5 122V510M445.5 122V510M515.5 122V510M585.5 122V510M655.5 122V510M725.5 122V510M795.5 122V510M865.5 122V510" stroke="#b4a48c" stroke-width="1" stroke-dasharray="1 2" fill="none" clip-path="url(#cb)"/>
<path d="M166 173.5H864M166 185.5H864M166 200.5H864M166 221.5H864M166 258.5H864M166 294.5H864M166 306.5H864M166 321.5H864M166 342.5H864M166 379.5H864M166 415.5H864M166 442.5H864M166 463.5H864M166 500.5H864M235.5 122V510M305.5 122V510M375.5 122V510M445.5 122V510M515.5 122V510M585.5 122V510M655.5 122V510M725.5 122V510M795.5 122V510M865.5 122V510" stroke="#9c8c9c" stroke-width="1" stroke-dasharray="1 2" fill="none" clip-path="url(#cg)"/>
<path d="M166 204.5H864M166 427.5H864" stroke="#f00000" stroke-width="1" stroke-dasharray="1 2" fill="none"/>
<path d="M818.5 122V510" stroke="#000" stroke-dasharray="1 2" fill="none"/>
<polyline points="166,465.3 235,454.6 305,446 375,438.6 445,431.1 515,425 585,419.1 655,413.9 725,408.7 795,404.2 818,402.7" stroke="#000" stroke-width="2.5" fill="none" shape-rendering="auto"/>
 </svg>
<div class="yl" style="top:168px">500</div>
<div class="yl" style="top:180px">400</div>
<div class="yl" style="top:195px">300</div>
<div class="yl" style="top:216px">200</div>
<div class="yl" style="top:253px">100</div>
<div class="yl" style="top:290px">50</div>
<div class="yl" style="top:301px">40</div>
<div class="yl" style="top:316px">30</div>
<div class="yl" style="top:337px">20</div>
<div class="yl" style="top:374px">10</div>
<div class="yl" style="top:410px">5</div>
<div class="yl" style="top:422px">4</div>
<div class="yl" style="top:437px">3</div>
<div class="yl" style="top:458px">2</div>
<div class="yl" style="top:495px">1</div>
<div class="yr" style="top:141px">14</div>
<div class="yr" style="top:193px">12</div>
<div class="yr" style="top:245px">10</div>
<div class="yr" style="top:297px">8</div>
<div class="yr" style="top:349px">6</div>
<div class="yr" style="top:401px">4</div>
<div class="yr" style="top:453px">2</div>
<div class="xl" style="left:274px;top:515px">5 <span>GB</span></div>
<div class="xl" style="left:414px;top:515px">10 <span>GB</span></div>
<div class="xl" style="left:554px;top:515px">15 <span>GB</span></div>
<div class="xl" style="left:694px;top:515px">20 <span>GB</span></div>
 <!-- status bar -->
 <div class="abs" style="left:0;top:536px;width:2px;height:23px;background:#fafafa"></div><div class="st" style="left:2px;width:220px"></div>
 <div class="st" style="left:225px;width:220px"></div>
 <div class="st" style="left:447px;width:221px"><span>Finalized BD-R (Sequential)</span></div>
 <div class="st" style="left:670px;width:223px"><span>VERBAT-IMe/000</span></div>
 <svg class="abs" style="left:896px;top:544px" width="15" height="15"><path d="M14 1L1 14M14 5L5 14M14 9L9 14" stroke="#a0a0a0" stroke-width="1.2"/></svg>
</div>
</body></html>
